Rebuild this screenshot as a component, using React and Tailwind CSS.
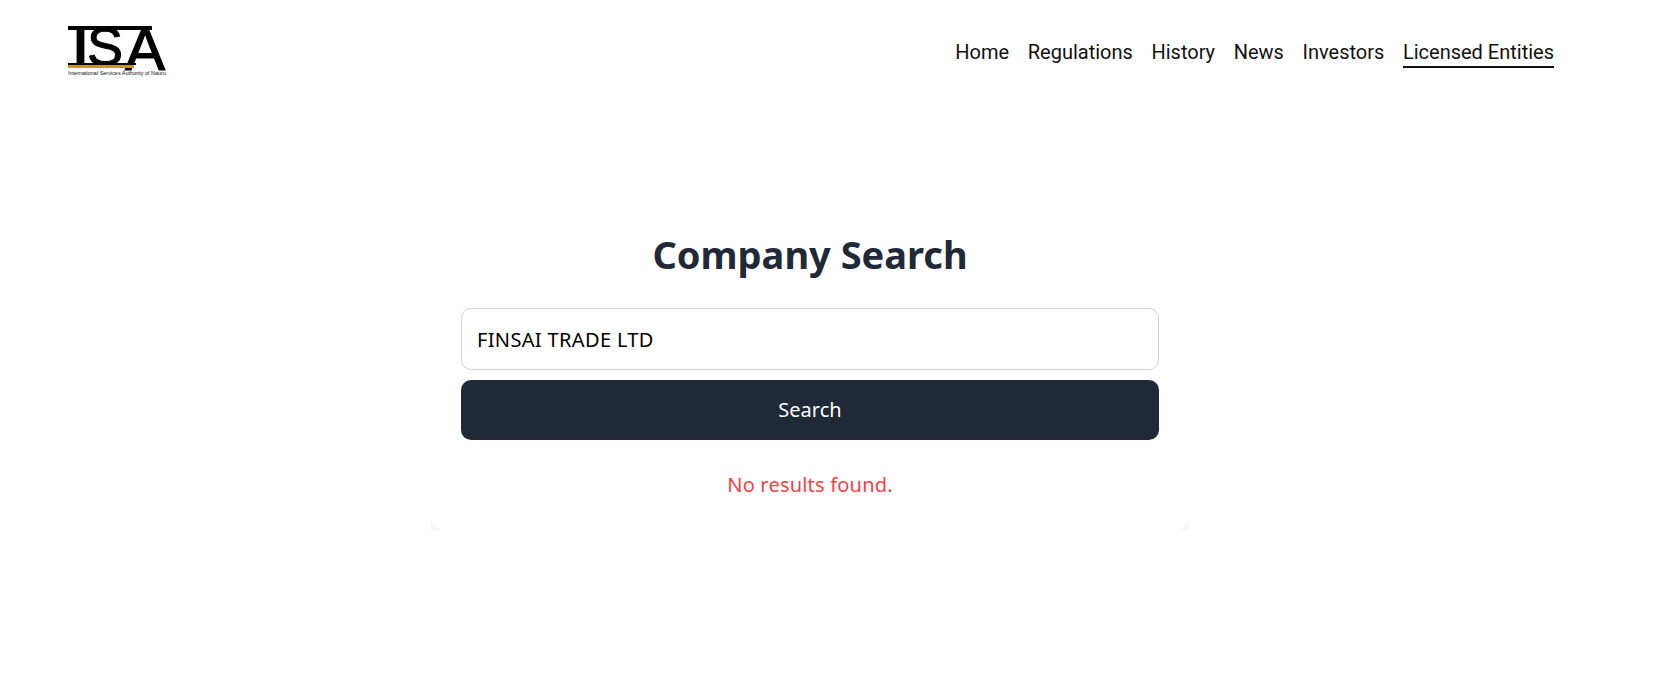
import React from "react";

const links = ["Home", "Regulations", "History", "News", "Investors", "Licensed Entities"];

const Logo = () => (
  <svg width="100" height="58" viewBox="68 22 100 58" className="block overflow-visible">
    <rect x="68" y="26" width="84" height="4" fill="#000" />
    <text x="73" y="65" fontFamily="Liberation Sans, sans-serif" fontWeight="700" fontSize="54" fill="#000">I</text>
    <text x="87" y="65" fontFamily="Liberation Sans, sans-serif" fontWeight="400" stroke="#000" strokeWidth="1" fontSize="54" fill="#000">S</text>
    <text x="125" y="70" fontFamily="Liberation Sans, sans-serif" fontWeight="400" stroke="#000" strokeWidth="1.2" fontSize="60" fill="#000">A</text>
    <rect x="68" y="63" width="68" height="2" fill="#000" />
    <rect x="68" y="65" width="66" height="3" fill="#c8961e" />
    <text x="68" y="75" fontFamily="Liberation Sans, sans-serif" fontSize="5" textLength="98" lengthAdjust="spacingAndGlyphs" fill="#111">International Services Authority of Nauru</text>
  </svg>
);

export default function App() {
  return (
    <div className="min-h-[693px] bg-white font-['Noto_Sans',sans-serif]">
      <header className="flex items-start justify-between pl-[68px] pr-[106px] pt-[22px]">
        <Logo />
        <nav className="mt-[12px] flex items-center gap-[18.6px] font-['Roboto',sans-serif] text-[20px] leading-[24px] text-[#111]">
          {links.map((l) => (
            <a key={l} href="#" className={l === "Licensed Entities" ? "border-b-2 border-[#111] pt-1.5 pb-[2px]" : "border-b-2 border-transparent pt-1.5 pb-[2px]"}>
              {l}
            </a>
          ))}
        </nav>
      </header>
      <main className="w-[1620px]">
        <div className="relative mx-auto mt-[147px] h-[303px] w-[758px] px-[30px] text-center">
          {/* faint corners under the card */}
          <div className="absolute right-0 bottom-0 left-0 h-[14px] bg-[#f7f7f7]" />
          <div className="absolute inset-0 rounded-[14px] bg-white" />
          <div className="relative">
            <h1 className="text-[38px] font-bold leading-[54px] text-[#1f2937]">Company Search</h1>
            <input
              type="text"
              defaultValue="FINSAI TRADE LTD"
              className="mt-[27px] block h-[62px] w-full rounded-[10px] border border-[#d1d5db] bg-white px-[15px] text-[20px] tracking-[0.35px] text-black outline-none"
            />
            <button className="mt-[10px] block h-[60px] w-full rounded-[10px] bg-[#1f2937] text-[20px] font-normal text-white">
              Search
            </button>
            <p className="mt-[30px] text-[20px] tracking-[0.2px] text-[#ef4444]">No results found.</p>
          </div>
        </div>
      </main>
    </div>
  );
}
